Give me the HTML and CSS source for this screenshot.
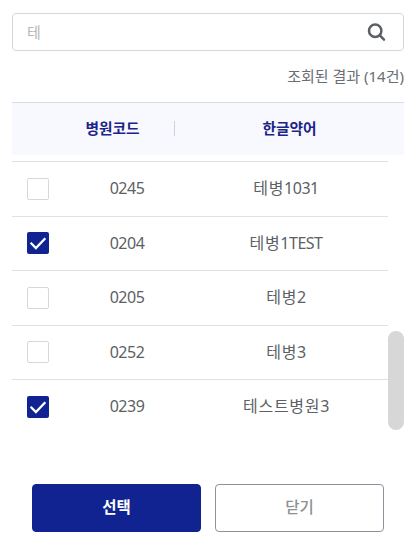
FILE: index.html
```
<!DOCTYPE html>
<html lang="ko">
<head>
<meta charset="utf-8">
<title>병원 조회</title>
<link rel="stylesheet" href="styles.css">
</head>
<body>
<main class="dialog">
  <div class="search">
    <span class="query">테</span>
    <svg class="search-icon" viewBox="0 0 20 20"><circle cx="8.2" cy="8.7" r="6.2"/><path d="M12.6 13.2 17 17.7"/></svg>
  </div>
  <p class="result">조회된 결과 (14건)</p>
  <div class="head">
    <span class="head-code">병원코드</span>
    <span class="head-name">한글약어</span>
  </div>
  <div class="list">
    <div class="rows">
      <div class="row"><span class="check"></span><span class="code">0245</span><span class="name"><span class="ko">테병</span>1031</span></div>
      <div class="row"><span class="check checked"><svg viewBox="0 0 22 22"><path d="M3.6 10.8 8.9 16 18.3 6.2"/></svg></span><span class="code">0204</span><span class="name"><span class="ko">테병</span>1TEST</span></div>
      <div class="row"><span class="check"></span><span class="code">0205</span><span class="name"><span class="ko">테병</span>2</span></div>
      <div class="row"><span class="check"></span><span class="code">0252</span><span class="name"><span class="ko">테병</span>3</span></div>
      <div class="row"><span class="check checked"><svg viewBox="0 0 22 22"><path d="M3.6 10.8 8.9 16 18.3 6.2"/></svg></span><span class="code">0239</span><span class="name"><span class="ko">테스트병원</span>3</span></div>
    </div>
    <div class="scrollbar"><div class="thumb"></div></div>
  </div>
  <div class="actions">
    <button class="button primary">선택</button>
    <button class="button">닫기</button>
  </div>
</main>
</body>
</html>
```
FILE: styles.css
```
* { box-sizing: border-box; }
body {
  margin: 0;
  background: #fff;
  color: #5c5f64;
  font-family: "Noto Sans", "Noto Sans CJK KR", sans-serif;
}
.dialog { width: 404px; padding: 13px 0 0 12px; }
.search {
  display: flex;
  align-items: center;
  justify-content: space-between;
  height: 38px;
  padding: 0 16px 0 14px;
  border: 1.5px solid #d2d8dd;
  border-radius: 4px;
}
.query { color: #b3b6b9; font-size: 15px; line-height: 20px; padding-bottom: 1px; }
.search-icon {
  width: 20px;
  height: 20px;
  fill: none;
  stroke: #5c6064;
  stroke-width: 2.5;
  stroke-linecap: round;
}
.result {
  height: 51px;
  margin: 0;
  padding-top: 15px;
  color: #6a6d72;
  font-size: 15px;
  line-height: 20px;
  text-align: right;
  white-space: nowrap;
}
.head {
  display: grid;
  grid-template-columns: 163px 1fr;
  align-items: center;
  height: 53px;
  background: #f8f9fe;
  border-top: 1px solid #d8dde1;
  color: #1b2487;
  font-size: 14.7px;
  font-weight: 700;
  line-height: 20px;
  text-align: center;
}
.head-code {
  height: 15px;
  margin-bottom: 2px;
  padding-left: 39px;
  border-right: 1px solid #cdd3d8;
  line-height: 15px;
}
.head-name { padding-bottom: 2px; }
.list { display: flex; margin-top: 6px; }
.rows { width: 376px; }
.row {
  display: grid;
  grid-template-columns: 59px 112px 205px;
  align-items: center;
  height: 54.5px;
  border-top: 1px solid #dce3e8;
  font-size: 16px;
  line-height: 22px;
  letter-spacing: -.5px;
}
.check {
  display: block;
  width: 22px;
  height: 22px;
  margin-left: 14.5px;
  border: 1px solid #d4d9dd;
  border-radius: 2px;
}
.checked { border: 0; background: #102391; }
.checked svg {
  display: block;
  width: 22px;
  height: 22px;
  fill: none;
  stroke: #fff;
  stroke-width: 2.3;
}
.code, .name { padding-bottom: 1px; text-align: center; }
.name { padding-left: 1px; }
.ko { letter-spacing: .7px; }
.scrollbar { width: 16px; padding-top: 170px; }
.thumb { height: 99px; border-radius: 8px; background: #d7d7d7; }
.actions {
  display: grid;
  grid-template-columns: 169px 169px;
  gap: 14px;
  margin: 50px 0 0 20px;
}
.button {
  height: 48px;
  padding: 0 0 3px;
  border: 1px solid #8c939c;
  border-radius: 4px;
  background: #fff;
  color: #8c9096;
  font: 500 15.5px/22px "Noto Sans CJK KR", sans-serif;
}
.primary { border-color: #102391; background: #102391; color: #fff; font-weight: 700; }
```
